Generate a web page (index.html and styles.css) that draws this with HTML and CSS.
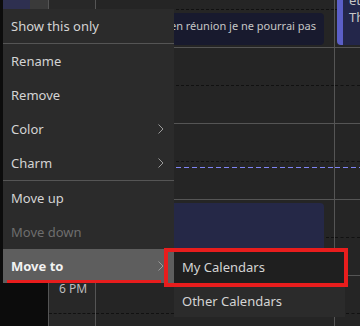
FILE: index.html
```html
<!DOCTYPE html>
<html lang="en">
<head>
  <meta charset="UTF-8">
  <meta name="viewport" content="width=device-width, initial-scale=1.0">
  <title>Calendar menu</title>
  <link rel="stylesheet" href="styles.css">
</head>
<body>
  <!-- Calendar grid behind the menu -->
  <div class="calendar">
    <div class="col sidebar">
      <div class="sidebar-top">
        <span class="sidebar-event"></span>
        <span class="sidebar-grey"></span>
      </div>
    </div>
    <div class="col times">
      <div class="slot first"></div>
      <div class="slot hour"></div>
      <div class="slot half"></div>
      <div class="slot hour"></div>
      <div class="slot half"></div>
      <div class="slot hour"></div>
      <div class="slot half"></div>
      <div class="slot hour"></div>
      <div class="slot half"><span class="time-label">6 PM</span></div>
    </div>
    <div class="col day">
      <div class="slot first"></div>
      <div class="slot hour"></div>
      <div class="slot half"></div>
      <div class="slot hour"></div>
      <div class="slot half"></div>
      <div class="slot hour"></div>
      <div class="slot half"></div>
      <div class="slot hour"></div>
      <div class="slot half"></div>
      <div class="event past">en réunion je ne pourrai pas</div>
      <div class="event busy"></div>
      <div class="now-line"></div>
    </div>
    <div class="col day next">
      <div class="slot first"></div>
      <div class="slot hour"></div>
      <div class="slot half"></div>
      <div class="slot hour"></div>
      <div class="slot half"></div>
      <div class="slot hour"></div>
      <div class="slot half"></div>
      <div class="slot hour"></div>
      <div class="slot half"></div>
      <div class="event side">et<br>Th</div>
      <div class="now-line"></div>
    </div>
  </div>

  <!-- Context menu -->
  <div class="menu">
    <div class="item">Show this only</div>
    <div class="sep"></div>
    <div class="item">Rename</div>
    <div class="item">Remove</div>
    <div class="item">Color <svg class="chev" viewBox="0 0 6 10"><polyline points="0.5,0.5 5,5 0.5,9.5"/></svg></div>
    <div class="item">Charm <svg class="chev" viewBox="0 0 6 10"><polyline points="0.5,0.5 5,5 0.5,9.5"/></svg></div>
    <div class="sep"></div>
    <div class="item">Move up</div>
    <div class="item disabled">Move down</div>
    <div class="item active">Move to <svg class="chev" viewBox="0 0 6 10"><polyline points="0.5,0.5 5,5 0.5,9.5"/></svg></div>
  </div>

  <!-- Submenu -->
  <div class="submenu">
    <div class="item hover">My Calendars</div>
    <div class="item">Other Calendars</div>
  </div>

  <!-- Red highlight marks -->
  <div class="mark-box"></div>
  <div class="mark-line"></div>
</body>
</html>
```

FILE: styles.css
```css
/* Page */
body {
  margin: 0;
  width: 360px;
  height: 326px;
  overflow: hidden;
  position: relative;
  background-color: #252525;
  font-family: "Segoe UI", "Noto Sans", sans-serif;
}

/* Calendar grid */
.calendar {
  display: grid;
  grid-template-columns: 48px 47px 239px 26px;
  height: 326px;
  overflow: hidden;
}
.col {
  position: relative;
  display: flex;
  flex-direction: column;
}
.sidebar {
  background-color: #0c0c0c;
}
.sidebar-top {
  display: flex;
  height: 9px;
  padding-left: 3px;
}
.sidebar-event {
  width: 27px;
  background-color: #2e3050;
}
.sidebar-grey {
  flex: 1;
  background-color: #3a3a3a;
}
.times {
  background-color: #282828;
  border-left: 1px solid #555;
}
.day {
  border-left: 1px solid #555;
}
.slot {
  box-sizing: border-box;
  flex: none;
  height: 38px;
}
.slot.first {
  height: 10px;
  border-bottom: 1px dashed #111;
}
.slot.hour {
  border-bottom: 1px solid #555;
}
.slot.half {
  border-bottom: 1px dashed #111;
}
.time-label {
  display: block;
  padding: 4px 0 0 10px;
  font-size: 12px;
  color: #bdbdbd;
}

/* Events */
.event {
  position: absolute;
  box-sizing: border-box;
  border-radius: 4px;
  color: #c6c6c6;
}
.event.past {
  left: 4px;
  right: 10px;
  top: 13px;
  height: 32px;
  background-color: #181a2e;
  display: flex;
  justify-content: flex-end;
  white-space: nowrap;
  overflow: hidden;
  padding: 5px 8px 0 0;
  font-size: 11px;
  line-height: 16px;
}
.event.busy {
  left: 4px;
  right: 10px;
  top: 203px;
  height: 60px;
  background-color: #252847;
}
.event.side {
  left: 2px;
  right: -6px;
  top: -10px;
  height: 55px;
  background-color: #23264a;
  border-left: 6px solid #5b5fc7;
  padding: 2px 0 0 6px;
  line-height: 17px;
  font-size: 13px;
}
.now-line {
  position: absolute;
  left: 0;
  right: 0;
  top: 167px;
  height: 1px;
  background: repeating-linear-gradient(90deg, #7f85f5 0 5px, transparent 5px 8px);
}

/* Context menu */
.menu,
.submenu {
  position: absolute;
  width: 171px;
  background-color: #2b2b2b;
}
.menu {
  left: 3px;
  top: 9px;
}
.submenu {
  left: 174px;
  top: 250px;
}
.item {
  display: flex;
  align-items: center;
  justify-content: space-between;
  height: 34px;
  padding: 0 10px 0 8px;
  font-size: 13px;
  color: #d4d4d4;
}
.submenu .item {
  height: 33px;
}
.item.disabled {
  color: #6e6e6e;
}
.item.active {
  background-color: #5e5e5e;
  color: #f2f2f2;
  font-weight: bold;
}
.item.hover {
  background-color: #1f1f1f;
  height: 34px;
}
.sep {
  height: 1px;
  background-color: #555;
}
.chev {
  width: 6px;
  height: 10px;
  fill: none;
  stroke: #9a9a9a;
  stroke-width: 1;
}

/* Red highlight marks */
.mark-box {
  position: absolute;
  left: 164px;
  top: 248px;
  width: 176px;
  height: 31px;
  border: 4px solid #e81d1d;
}
.mark-line {
  position: absolute;
  left: 7px;
  top: 280px;
  width: 154px;
  height: 3px;
  background-color: #e81d1d;
}
```
